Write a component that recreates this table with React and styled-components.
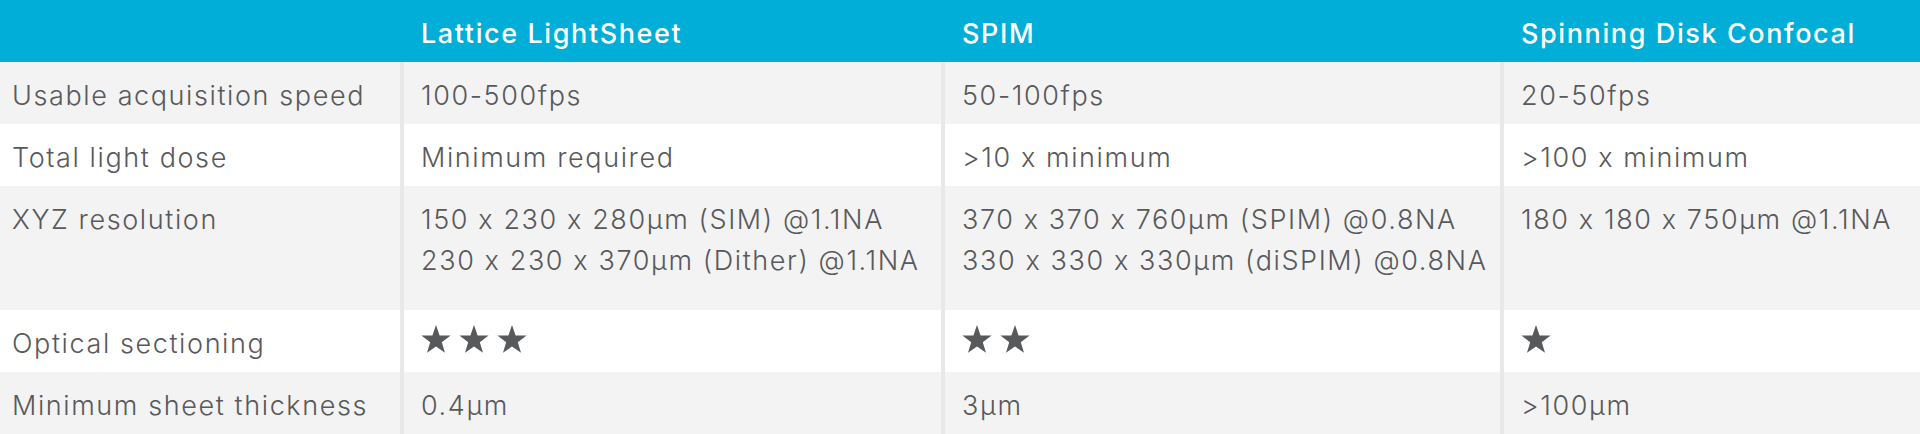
import React from "react";
import styled, { createGlobalStyle } from "styled-components";

const GlobalStyle = createGlobalStyle`
  html, body {
    margin: 0;
    padding: 0;
    background: #ffffff;
  }
  body {
    font-family: Inter, "Noto Sans", "Liberation Sans", sans-serif;
  }
`;

const Table = styled.div`
  width: 1920px;
  display: flex;
  flex-direction: column;
  color: #58595b;
  font-size: 27px;
  font-weight: 300;
  letter-spacing: 1.6px;
`;

const Row = styled.div`
  display: grid;
  grid-template-columns: 400px 541px 559px 1fr;
  height: ${(p) => (p.$tall ? "124px" : "62px")};
  background: ${(p) => (p.$shade ? "#f3f3f3" : "#ffffff")};
`;

const HeadRow = styled(Row)`
  background: #00aed8;
  color: #ffffff;
  font-weight: 500;
`;

const Cell = styled.div`
  box-sizing: border-box;
  padding: 13px 12px 0 ${(p) => (p.$divider ? "17px" : "12px")};
  line-height: 41px;
  border-left: ${(p) => (p.$divider ? "4px solid #e7e8e9" : "none")};
  white-space: nowrap;
`;

const HeadCell = styled(Cell)`
  padding-left: ${(p) => (p.$first ? "12px" : "21px")};
  border-left: none;
`;

const Stars = styled.div`
  display: flex;
  gap: 8px;
  padding-top: 2px;
`;

function Star() {
  return (
    <svg width="30" height="28" viewBox="0 0 30 28">
      <path
        d="M15 0 L18.6 10.4 L29.6 10.6 L20.8 17.2 L24 27.8 L15 21.5 L6 27.8 L9.2 17.2 L0.4 10.6 L11.4 10.4 Z"
        fill="#58595b"
      />
    </svg>
  );
}

function Rating({ count }) {
  return (
    <Stars>
      {Array.from({ length: count }).map((_, i) => (
        <Star key={i} />
      ))}
    </Stars>
  );
}

const rows = [
  {
    label: "Usable acquisition speed",
    shade: true,
    values: ["100-500fps", "50-100fps", "20-50fps"],
  },
  {
    label: "Total light dose",
    values: ["Minimum required", ">10 x minimum", ">100 x minimum"],
  },
  {
    label: "XYZ resolution",
    shade: true,
    tall: true,
    values: [
      ["150 x 230 x 280µm (SIM) @1.1NA", "230 x 230 x 370µm (Dither) @1.1NA"],
      ["370 x 370 x 760µm (SPIM) @0.8NA", "330 x 330 x 330µm (diSPIM) @0.8NA"],
      ["180 x 180 x 750µm @1.1NA"],
    ],
  },
  {
    label: "Optical sectioning",
    stars: [3, 2, 1],
  },
  {
    label: "Minimum sheet thickness",
    shade: true,
    values: ["0.4µm", "3µm", ">100µm"],
  },
];

const headers = ["Lattice LightSheet", "SPIM", "Spinning Disk Confocal"];

export default function App() {
  return (
    <>
      <GlobalStyle />
      <Table>
        <HeadRow>
          <HeadCell $first />
          {headers.map((h) => (
            <HeadCell key={h}>{h}</HeadCell>
          ))}
        </HeadRow>
        {rows.map((r) => (
          <Row key={r.label} $shade={r.shade} $tall={r.tall}>
            <Cell>{r.label}</Cell>
            {r.stars
              ? r.stars.map((n, i) => (
                  <Cell key={i} $divider>
                    <Rating count={n} />
                  </Cell>
                ))
              : r.values.map((v, i) => (
                  <Cell key={i} $divider>
                    {Array.isArray(v)
                      ? v.map((line) => <div key={line}>{line}</div>)
                      : v}
                  </Cell>
                ))}
          </Row>
        ))}
      </Table>
    </>
  );
}
